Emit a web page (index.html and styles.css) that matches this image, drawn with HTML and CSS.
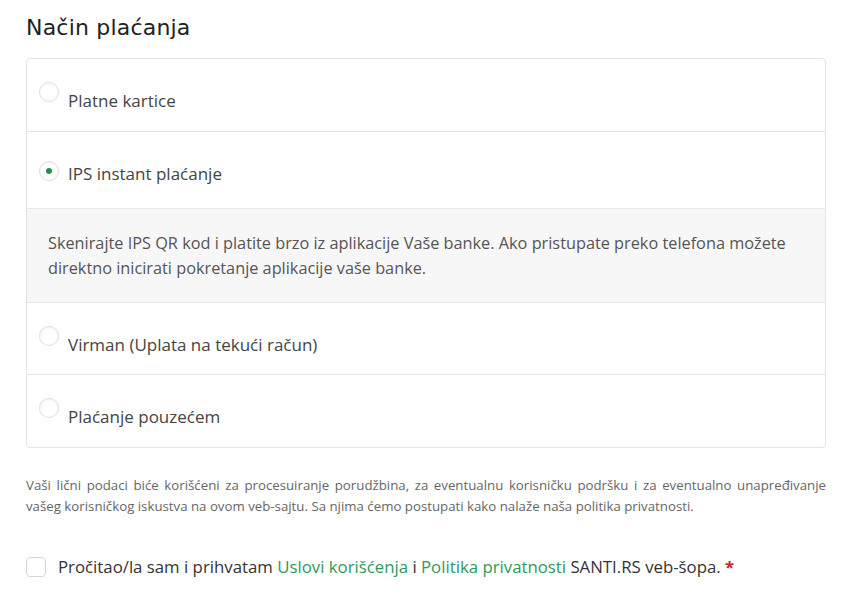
FILE: index.html
```html
<!DOCTYPE html>
<html lang="sr">
<head>
<meta charset="utf-8">
<link rel="stylesheet" href="styles.css">
</head>
<body>
<div class="page">
  <h3 class="title">Način plaćanja</h3>
  <ul class="methods">
    <li class="method">
      <span class="radio"></span>
      <span class="label low">Platne kartice</span>
    </li>
    <li class="method sel">
      <span class="radio checked"></span>
      <span class="label">IPS instant plaćanje</span>
    </li>
    <li class="desc">Skenirajte IPS QR kod i platite brzo iz aplikacije Vaše banke. Ako pristupate preko telefona možete direktno inicirati pokretanje aplikacije vaše banke.</li>
    <li class="method">
      <span class="radio"></span>
      <span class="label low">Virman (Uplata na tekući račun)</span>
    </li>
    <li class="method">
      <span class="radio"></span>
      <span class="label low">Plaćanje pouzećem</span>
    </li>
  </ul>
  <p class="privacy">Vaši lični podaci biće korišćeni za procesuiranje porudžbina, za eventualnu korisničku podršku i za eventualno unapređivanje vašeg korisničkog iskustva na ovom veb-sajtu. Sa njima ćemo postupati kako nalaže naša politika privatnosti.</p>
  <label class="terms">
    <span class="check"></span>
    <span class="terms-text">Pročitao/la sam i prihvatam <a class="link">Uslovi korišćenja</a> i <a class="link">Politika privatnosti</a> SANTI.RS veb-šopa. <span class="req">*</span></span>
  </label>
</div>
</body>
</html>
```
FILE: styles.css
```css
html, body {
  margin: 0;
  padding: 0;
  background: #fff;
}
.page {
  padding: 13px 24px 0 26px;
  font-family: "Open Sans", "Liberation Sans", sans-serif;
  color: #444;
}
.title {
  margin: 0 0 15px 0;
  font-family: "DejaVu Sans", "Noto Sans", sans-serif;
  font-weight: 400;
  font-size: 22px;
  line-height: 30px;
  color: #222;
  letter-spacing: 0.2px;
}
.methods {
  list-style: none;
  margin: 0;
  padding: 0;
  border: 1px solid #e4e4e4;
  border-radius: 4px;
  overflow: hidden;
}
.method {
  display: flex;
  align-items: flex-start;
  border-top: 1px solid #e4e4e4;
  height: 72px;
  box-sizing: border-box;
  padding: 23px 0 0 12px;
}
.method:first-child {
  border-top: none;
  height: 72px;
}
.method:last-child {
  height: 73px;
}
.method.sel {
  height: 77px;
  padding-top: 29px;
}
.radio {
  width: 18px;
  height: 18px;
  border: 1px solid #ddd;
  border-radius: 50%;
  background: #fff;
  flex: none;
  box-sizing: content-box;
  position: relative;
  box-shadow: inset 0 1px 2px rgba(0,0,0,0.05);
}
.radio.checked::after {
  content: "";
  position: absolute;
  left: 6px;
  top: 6px;
  width: 6px;
  height: 6px;
  border-radius: 50%;
  background: #2a8d57;
}
.label {
  margin-left: 9px;
  font-size: 17px;
  line-height: 24px;
  color: #444;
}
.label.low {
  margin-top: 7px;
}
.method.sel .label {
  margin-top: 1px;
}
.desc {
  background: #f7f7f7;
  border-top: 1px solid #e8e8e8;
  padding: 22px 20px 21px 21px;
  font-size: 16.3px;
  line-height: 25px;
  color: #555;
}
.privacy {
  margin: 27px 0 0 0;
  font-size: 13.25px;
  line-height: 21px;
  color: #666;
  text-align: justify;
}
.terms {
  display: flex;
  align-items: center;
  margin-top: 38px;
}
.check {
  width: 18px;
  height: 18px;
  border: 1px solid #d6d6d6;
  border-radius: 4px;
  flex: none;
}
.terms-text {
  margin-left: 12px;
  font-size: 16.8px;
  line-height: 24px;
  color: #333;
}
.link {
  color: #2e9a5a;
  text-decoration: none;
}
.req {
  color: #d0201d;
  font-weight: 700;
}
```
